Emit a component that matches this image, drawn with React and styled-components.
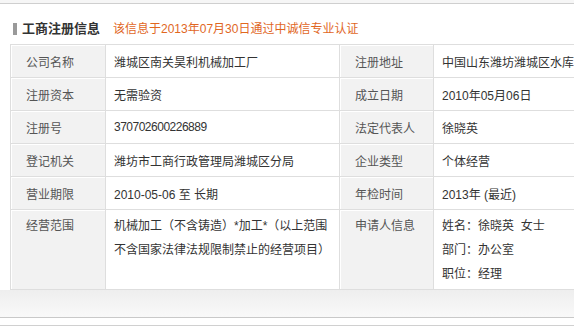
import styled, { createGlobalStyle } from 'styled-components';

const GlobalStyle = createGlobalStyle`
  html, body {
    margin: 0;
    padding: 0;
    background: #fff;
    overflow: hidden;
  }
  body {
    font-family: "Liberation Sans", "Noto Sans CJK SC", sans-serif;
    font-size: 12px;
    color: #333;
  }
`;

const rows = [
    ['公司名称', '潍城区南关昊利机械加工厂', '注册地址', '中国山东潍坊潍城区水库路'],
    ['注册资本', '无需验资', '成立日期', '2010年05月06日'],
    ['注册号', <Num key="n">370702600226889</Num>, '法定代表人', '徐晓英'],
    ['登记机关', '潍坊市工商行政管理局潍城区分局', '企业类型', '个体经营'],
    ['营业期限', '2010-05-06 至 长期', '年检时间', '2013年 (最近)'],
];

function Num({ children }) {
    return <NumText>{children}</NumText>
}

const App = () => {
    return (
        <Page>
            <GlobalStyle/>
            <TopStrip/>
            <Panel>
                <Heading>
                    <Bar/>
                    <Title>工商注册信息</Title>
                    <Notice>该信息于2013年07月30日通过中诚信专业认证</Notice>
                </Heading>

                <InfoTable>
                    <colgroup>
                        <col style={{ width: 95 }}/>
                        <col style={{ width: 234 }}/>
                        <col style={{ width: 94 }}/>
                        <col style={{ width: 240 }}/>
                    </colgroup>
                    <tbody>
                        {rows.map((row, index) => (
                            <tr key={index}>
                                <Label>{row[0]}</Label>
                                <Value>{row[1]}</Value>
                                <Label>{row[2]}</Label>
                                <Value>{row[3]}</Value>
                            </tr>
                        ))}
                        <tr>
                            <Label $tall>经营范围</Label>
                            <Value $tall>
                                机械加工（不含铸造）*加工*（以上范围<br/>
                                不含国家法律法规限制禁止的经营项目）
                            </Value>
                            <Label $tall>申请人信息</Label>
                            <Value $tall>
                                <Line>姓名：徐晓英&nbsp;&nbsp;女士</Line>
                                <Line>部门：办公室</Line>
                                <Line>职位：经理</Line>
                            </Value>
                        </tr>
                    </tbody>
                </InfoTable>
            </Panel>
            <FooterBar/>
            <Gap/>
        </Page>
    )
}

const Page = styled.div`
    width: 100%;
    min-height: 329px;
    background: #fff;
`

const TopStrip = styled.div`
    height: 3px;
    background: #f6f6f6;
    border-bottom: 1px solid #cfcfcf;
`

const Panel = styled.div`
    padding-left: 10px;
`

const Heading = styled.div`
    display: flex;
    align-items: center;
    height: 24px;
    margin-top: 11px;
    margin-bottom: 5px;
    padding-left: 3px;
`

const Bar = styled.span`
    width: 4px;
    height: 12px;
    margin-top: 3px;
    background: #9a9a9a;
    margin-right: 5px;
`

const Title = styled.span`
    font-family: "Noto Sans CJK SC", sans-serif;
    font-size: 13px;
    font-weight: bold;
    color: #333;
`

const Notice = styled.span`
    font-size: 12px;
    color: #e1671f;
    margin-left: 13px;
    white-space: nowrap;
`

const InfoTable = styled.table`
    border-collapse: collapse;
    table-layout: fixed;
    width: 663px;
`

const Label = styled.td`
    height: 32px;
    padding: 0 0 0 15px;
    background: #f2f2f2;
    border: 1px solid #dedede;
    box-shadow: inset 1px 1px 0 #fff;
    color: #555;
    white-space: nowrap;
    vertical-align: ${props => props.$tall ? 'top' : 'middle'};
    ${props => props.$tall && `
        height: 75px;
        padding-top: 4px;
        line-height: 24px;
    `}
`

const Value = styled.td`
    height: 32px;
    padding: 0 0 0 8px;
    border: 1px solid #dedede;
    color: #333;
    white-space: nowrap;
    overflow: hidden;
    vertical-align: ${props => props.$tall ? 'top' : 'middle'};
    ${props => props.$tall && `
        height: 75px;
        padding-top: 4px;
        line-height: 24px;
    `}
`

const Line = styled.div`
    line-height: 24px;
`

const NumText = styled.span`
    letter-spacing: -0.5px;
`

const FooterBar = styled.div`
    height: 27px;
    background: linear-gradient(#eeeeee, #f9f9f9);
    border-bottom: 1px solid #c9c9c9;
`

const Gap = styled.div`
    height: 7px;
    border-bottom: 1px solid #d0d0d0;
`

export default App;
